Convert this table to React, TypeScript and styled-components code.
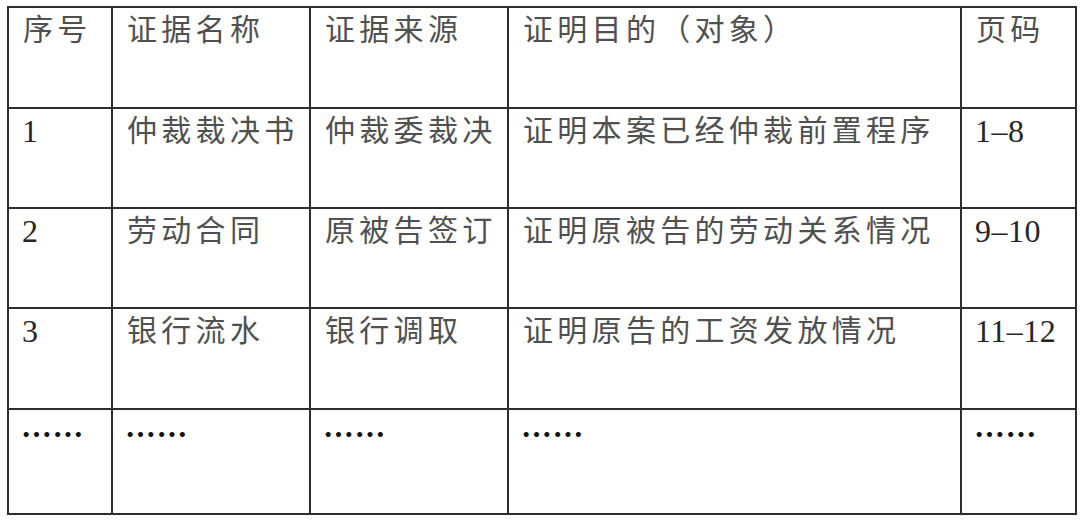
import React from "react";
import styled, { createGlobalStyle, css } from "styled-components";

const GlobalStyle = createGlobalStyle`
  html, body {
    margin: 0;
    padding: 0;
    background: #ffffff;
  }
`;

const Page = styled.div`
  width: 1080px;
  height: 521px;
  padding: 6px 0 0 7px;
  box-sizing: border-box;
  background: #ffffff;
`;

const Table = styled.table`
  border-collapse: collapse;
  table-layout: fixed;
  width: 1070px;
  font-family: "Liberation Serif", "Noto Sans CJK SC", serif;
`;

const Row = styled.tr<{ $h: number }>`
  height: ${(p) => p.$h}px;
`;

type Kind = "text" | "num" | "dots";

const kinds = {
  text: css`
    padding: 4px 14px 0;
    font-size: 30px;
    letter-spacing: 4.3px;
    color: #505050;
  `,
  num: css`
    padding: 4px 13px 0;
    font-size: 32px;
    letter-spacing: 0.5px;
    color: #262626;
  `,
  dots: css`
    padding: 0 12px 0;
    font-family: "Noto Sans CJK SC", sans-serif;
    font-size: 31px;
    line-height: 46px;
    font-weight: 700;
    letter-spacing: 0.5px;
    color: #111111;
  `,
};

const Cell = styled.td<{ $kind: Kind }>`
  border: 2px solid #2e2e2e;
  vertical-align: top;
  line-height: 36px;
  white-space: nowrap;
  ${(p) => kinds[p.$kind]}
`;

const widths = [104, 198, 198, 453, 115];

const rows: { h: number; cells: string[] }[] = [
  { h: 101, cells: ["序号", "证据名称", "证据来源", "证明目的（对象）", "页码"] },
  { h: 100, cells: ["1", "仲裁裁决书", "仲裁委裁决", "证明本案已经仲裁前置程序", "1–8"] },
  { h: 100, cells: ["2", "劳动合同", "原被告签订", "证明原被告的劳动关系情况", "9–10"] },
  { h: 101, cells: ["3", "银行流水", "银行调取", "证明原告的工资发放情况", "11–12"] },
  { h: 105, cells: ["……", "……", "……", "……", "……"] },
];

const kindOf = (s: string): Kind =>
  /^…+$/.test(s) ? "dots" : /^[0-9–]+$/.test(s) ? "num" : "text";

export default function App() {
  return (
    <>
      <GlobalStyle />
      <Page>
        <Table>
          <colgroup>
            {widths.map((w, i) => (
              <col key={i} style={{ width: w }} />
            ))}
          </colgroup>
          <tbody>
            {rows.map((r, ri) => (
              <Row key={ri} $h={r.h}>
                {r.cells.map((c, ci) => (
                  <Cell key={ci} $kind={kindOf(c)}>
                    {c}
                  </Cell>
                ))}
              </Row>
            ))}
          </tbody>
        </Table>
      </Page>
    </>
  );
}
